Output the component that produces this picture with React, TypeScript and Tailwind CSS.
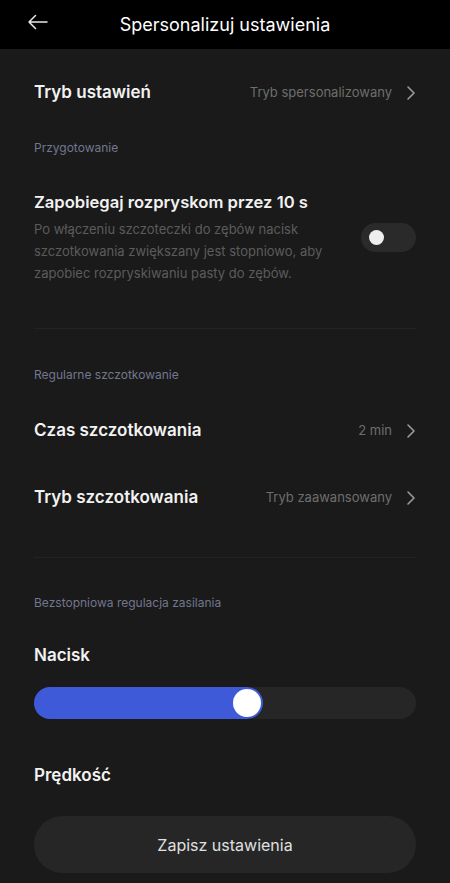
import { useState } from 'react';

function Chevron() {
  return (
    <svg width="10" height="16" viewBox="0 0 10 16" fill="none" className="ml-[14px] shrink-0">
      <path d="M2 2l6 6-6 6" stroke="#9a9a9a" strokeWidth="1.6" strokeLinecap="round" strokeLinejoin="round" />
    </svg>
  );
}

function NavRow({ label, value, className = 'h-[67px]' }: { label: string; value: string; className?: string }) {
  return (
    <div className={`flex items-center justify-between ${className}`}>
      <span className="text-[17px] font-semibold text-[#f2f2f2]">{label}</span>
      <div className="flex items-center">
        <span className="text-[13px] text-[#6e6e6e]">{value}</span>
        <Chevron />
      </div>
    </div>
  );
}

function SectionLabel({ children, className = '' }: { children: string; className?: string }) {
  return <p className={`text-[12px] leading-4 text-[#72768f] ${className}`}>{children}</p>;
}

export default function App() {
  const [splash, setSplash] = useState(false);
  const [pressure] = useState(60);

  return (
    <div className="min-h-[883px] bg-[#1a1a1a] font-['Inter','Noto_Sans',sans-serif]">
      <header className="relative flex h-[49px] items-center justify-center bg-black">
        <svg width="22" height="16" viewBox="0 0 22 16" fill="none" className="absolute left-[27px] top-[14px]">
          <path d="M20 8H2M8.5 1.5L2 8l6.5 6.5" stroke="#e8e8e8" strokeWidth="1.5" strokeLinecap="round" strokeLinejoin="round" />
        </svg>
        <h1 className="text-[18px] text-white">Spersonalizuj ustawienia</h1>
      </header>

      <main className="px-[34px] pt-[16px]">
        <NavRow label="Tryb ustawień" value="Tryb spersonalizowany" className="h-[56px]" />

        <SectionLabel className="mt-[19px]">Przygotowanie</SectionLabel>

        <div className="mt-[35px] flex items-center justify-between">
          <div className="w-[300px]">
            <p className="whitespace-nowrap text-[16.6px] font-semibold leading-[22px] text-[#f2f2f2]">Zapobiegaj rozpryskom przez 10 s</p>
            <p className="mt-[5px] text-[13px] leading-[22px] text-[#5c5c5c]">
              Po włączeniu szczoteczki do zębów nacisk szczotkowania zwiększany jest stopniowo, aby zapobiec
              rozpryskiwaniu pasty do zębów.
            </p>
          </div>
          <button
            onClick={() => setSplash(!splash)}
            className={`flex h-[29px] w-[55px] items-center rounded-full px-[8px] ${splash ? 'justify-end bg-[#3f5ad8]' : 'bg-[#2a2a2a]'}`}
          >
            <span className="h-[15px] w-[15px] rounded-full bg-[#eeeeee]" />
          </button>
        </div>

        <div className="mt-[44px] h-px bg-[#232323]" />

        <SectionLabel className="mt-[38px]">Regularne szczotkowanie</SectionLabel>

        <div className="mt-[14px]">
          <NavRow label="Czas szczotkowania" value="2 min" />
          <NavRow label="Tryb szczotkowania" value="Tryb zaawansowany" />
        </div>

        <div className="mt-[26px] h-px bg-[#232323]" />

        <SectionLabel className="mt-[37px]">Bezstopniowa regulacja zasilania</SectionLabel>

        <p className="mt-[32px] text-[17px] font-semibold leading-6 text-[#f2f2f2]">Nacisk</p>

        <div className="relative mt-[20px] h-[32px] rounded-full bg-[#262626]">
          <div className="flex h-full items-center justify-end rounded-full bg-[#3f5ad8] pr-[2px]" style={{ width: `${pressure}%` }}>
            <span className="h-[28px] w-[28px] rounded-full bg-white" />
          </div>
        </div>

        <p className="mt-[44px] text-[17px] font-semibold leading-6 text-[#f2f2f2]">Prędkość</p>

        <button className="mt-[29px] flex h-[57px] w-full items-center justify-center rounded-full bg-[#262626] text-[16px] text-[#e0e0e0]">
          Zapisz ustawienia
        </button>
      </main>
    </div>
  );
}
